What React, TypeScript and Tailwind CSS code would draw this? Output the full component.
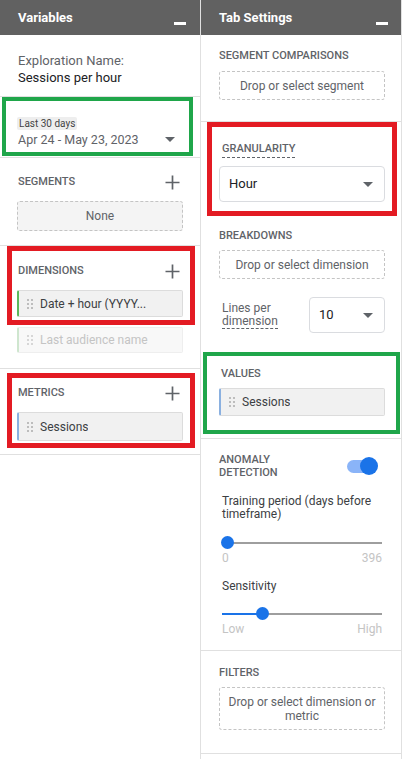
import React from "react";

function Minus() {
  return <span className="block w-[12px] h-[3px] bg-white" />;
}

function Plus() {
  return (
    <svg width="15" height="15" viewBox="0 0 15 15" className="text-[#5f6368]">
      <path d="M7.5 0.5v14M0.5 7.5h14" stroke="currentColor" strokeWidth="1.7" />
    </svg>
  );
}

function Caret() {
  return (
    <svg width="10" height="5" viewBox="0 0 10 5">
      <path d="M0 0h10L5 5z" fill="#5f6368" />
    </svg>
  );
}

function Handle({ faded }: { faded?: boolean }) {
  return (
    <span className="grid grid-cols-2 gap-x-[2px] gap-y-[2px] w-[6px]">
      {[0, 1, 2, 3, 4, 5].map((i) => (
        <span key={i} className={`block w-[2px] h-[2px] ${faded ? "bg-[#d6d6d6]" : "bg-[#bdbdbd]"}`} />
      ))}
    </span>
  );
}

function Chip({ label, color, faded, h }: { label: string; color: string; faded?: boolean; h: string }) {
  return (
    <div
      className={`flex items-center gap-[7px] pl-[8px] w-[166px] ${h} ${faded ? "bg-[#f8f8f8] border-[#eeeeee]" : "bg-[#f1f1f1] border-[#dcdcdc]"} border border-l-2 ${color} rounded-[2px]`}
    >
      <Handle faded={faded} />
      <span className={`text-[12px] leading-none truncate ${faded ? "text-[#c4c4c4]" : "text-[#3c4043]"}`}>{label}</span>
    </div>
  );
}

function Heading({ children }: { children: React.ReactNode }) {
  return <div className="text-[11px] leading-[16px] font-medium text-[#5f6368]">{children}</div>;
}

function DropBox({ children, h, bg }: { children: React.ReactNode; h: string; bg?: string }) {
  return (
    <div
      className={`w-[166px] ${h} ${bg ?? "bg-white"} border border-dashed border-[#c4c4c4] rounded-[3px] flex items-center justify-center text-center text-[12px] leading-[14px] text-[#5f6368]`}
    >
      {children}
    </div>
  );
}

function Select({ value, w }: { value: string; w: string }) {
  return (
    <div className={`${w} h-[36px] border border-[#dadce0] rounded-[4px] bg-white flex items-center justify-between pl-[9px] pr-[11px]`}>
      <span className="text-[13px] text-[#202124]">{value}</span>
      <Caret />
    </div>
  );
}

function Slider({ pos, fill }: { pos: number; fill?: boolean }) {
  return (
    <div className="relative h-[16px] w-full">
      <div className="absolute left-0 right-0 top-[7px] h-[2px] bg-[#9e9e9e]" />
      {fill && <div className="absolute left-0 top-[7px] h-[2px] bg-[#1a73e8]" style={{ width: pos }} />}
      <div
        className="absolute top-[1px] w-[13px] h-[13px] rounded-full bg-[#1a73e8]"
        style={{ left: pos - 6 }}
      />
    </div>
  );
}

export default function App() {
  return (
    <div className="w-[403px] h-[759px] bg-white flex font-['Roboto',sans-serif] overflow-hidden">
      {/* left: variables */}
      <div className="w-[201px] border-r border-[#e0e0e0] flex flex-col">
        <div className="h-[35px] bg-[#616161] flex items-center justify-between pl-[18px] pr-[14px]">
          <span className="text-white text-[13px] font-bold">Variables</span>
          <span className="pt-[12px]"><Minus /></span>
        </div>

        <div className="pt-[17px] pb-[10px] pl-[18px] border-b border-[#e0e0e0] text-[13px] leading-[17px]">
          <div className="text-[#5f6368]">Exploration Name:</div>
          <div className="text-[#202124]">Sessions per hour</div>
        </div>

        <div className="pb-[1px] border-b border-[#e0e0e0]">
          <div className="ml-[2px] w-[191px] h-[59px] border-4 border-[#1fa64a] pl-[11px] pr-[14px] pt-[16px]">
            <span className="block w-fit bg-[#eeeeee] rounded-[2px] px-[2px] h-[13px] text-[10px] leading-[13px] text-[#444]">
              Last 30 days
            </span>
            <div className="flex items-center justify-between pl-[1px] h-[17px] mt-[1px]">
              <span className="text-[12.5px] leading-[17px] text-[#5f6368]">Apr 24 - May 23, 2023</span>
              <Caret />
            </div>
          </div>
        </div>

        <div className="pt-[16px] pb-[14px] pl-[17px] pr-[20px] border-b border-[#e0e0e0]">
          <div className="flex items-center justify-between pl-[1px]">
            <Heading>SEGMENTS</Heading>
            <Plus />
          </div>
          <div className="mt-[11px]">
            <DropBox h="h-[30px]" bg="bg-[#f4f4f4]">None</DropBox>
          </div>
        </div>

        <div className="pb-[15px] border-b border-[#e0e0e0]">
          <div className="ml-[7px] w-[188px] h-[79px] border-[5px] border-[#e31b23] pt-[12px] pl-[5px]">
            <div className="flex items-center justify-between pl-[1px] pr-[10px]">
              <Heading>DIMENSIONS</Heading>
              <Plus />
            </div>
            <div className="mt-[11px]">
              <Chip label="Date + hour (YYYY..." color="border-l-[#5cb85c]" h="h-[27px]" />
            </div>
          </div>
          <div className="mt-[2px] ml-[17px]">
            <Chip label="Last audience name" color="border-l-[#cfe6cf]" faded h="h-[26px]" />
          </div>
        </div>

        <div className="pt-[4px] pb-[6px] border-b border-[#e0e0e0]">
          <div className="ml-[7px] w-[188px] h-[75px] border-[5px] border-[#e31b23] pt-[7px] pl-[5px]">
            <div className="flex items-center justify-between pl-[1px] pr-[10px]">
              <Heading>METRICS</Heading>
              <Plus />
            </div>
            <div className="mt-[11px]">
              <Chip label="Sessions" color="border-l-[#8ab0e0]" h="h-[29px]" />
            </div>
          </div>
        </div>
      </div>

      {/* right: tab settings */}
      <div className="w-[201px] border-r border-[#e0e0e0] flex flex-col">
        <div className="h-[35px] bg-[#616161] flex items-center justify-between pl-[18px] pr-[13px]">
          <span className="text-white text-[13px] font-bold">Tab Settings</span>
          <span className="pt-[12px]"><Minus /></span>
        </div>

        <div className="pt-[13px] pb-[21px] pl-[18px] border-b border-[#e0e0e0]">
          <Heading>SEGMENT COMPARISONS</Heading>
          <div className="mt-[7px]">
            <DropBox h="h-[29px]">Drop or select segment</DropBox>
          </div>
        </div>

        <div className="ml-[6px] w-[190px] h-[94px] border-[5px] border-[#e31b23] pt-[8px] pl-[7px]">
          <div className="pl-[3px]">
            <span className="inline-block border-b border-dashed border-[#5f6368]">
              <Heading>GRANULARITY</Heading>
            </span>
          </div>
          <div className="mt-[7px]">
            <Select value="Hour" w="w-[166px]" />
          </div>
        </div>

        <div className="pt-[12px] pb-[19px] pl-[18px]">
          <Heading>BREAKDOWNS</Heading>
          <div className="mt-[6px]">
            <DropBox h="h-[29px]">Drop or select dimension</DropBox>
          </div>
          <div className="mt-[18px] w-[166px] flex items-center justify-between">
            <span className="pl-[3px] text-[12px] leading-[13px] text-[#5f6368]">
              <span className="block">Lines per</span>
              <span className="inline-block border-b border-dashed border-[#5f6368]">dimension</span>
            </span>
            <Select value="10" w="w-[76px]" />
          </div>
        </div>

        <div className="pb-[4px] border-b border-[#e0e0e0]">
          <div className="ml-[2px] w-[197px] h-[82px] border-4 border-[#1fa64a] pt-[10px] pl-[12px]">
            <div className="pl-[2px]">
              <Heading>VALUES</Heading>
            </div>
            <div className="mt-[6px]">
              <Chip label="Sessions" color="border-l-[#8ab0e0]" h="h-[28px]" />
            </div>
          </div>
        </div>

        <div className="pt-[14px] pb-[14px] pl-[18px] pr-[19px] border-b border-[#e0e0e0]">
          <div className="flex items-center justify-between pr-[4px]">
            <span className="text-[11px] leading-[13px] font-medium text-[#5f6368]">
              ANOMALY
              <br />
              DETECTION
            </span>
            <span className="relative w-[31px] h-[18px] flex items-center">
              <span className="block w-[30px] h-[13px] rounded-full bg-[#8ab4f8]" />
              <span className="absolute right-0 top-0 w-[18px] h-[18px] rounded-full bg-[#1a73e8]" />
            </span>
          </div>
          <div className="pl-[3px]">
            <div className="mt-[16px] text-[12px] leading-[13px] text-[#3c4043]">
              Training period (days before
              <br />
              timeframe)
            </div>
            <div className="mt-[14px]">
              <Slider pos={5} />
            </div>
            <div className="flex justify-between text-[12px] leading-[14px] text-[#c4c4c4]">
              <span>0</span>
              <span>396</span>
            </div>
            <div className="mt-[14px] text-[12px] leading-[14px] text-[#3c4043]">Sensitivity</div>
            <div className="mt-[13px]">
              <Slider pos={40} fill />
            </div>
            <div className="flex justify-between text-[12px] leading-[14px] text-[#c4c4c4]">
              <span>Low</span>
              <span>High</span>
            </div>
          </div>
        </div>

        <div className="pt-[14px] pb-[23px] pl-[18px] border-b border-[#e0e0e0]">
          <Heading>FILTERS</Heading>
          <div className="mt-[6px]">
            <DropBox h="h-[43px]">
              Drop or select dimension or
              <br />
              metric
            </DropBox>
          </div>
        </div>
      </div>
    </div>
  );
}
